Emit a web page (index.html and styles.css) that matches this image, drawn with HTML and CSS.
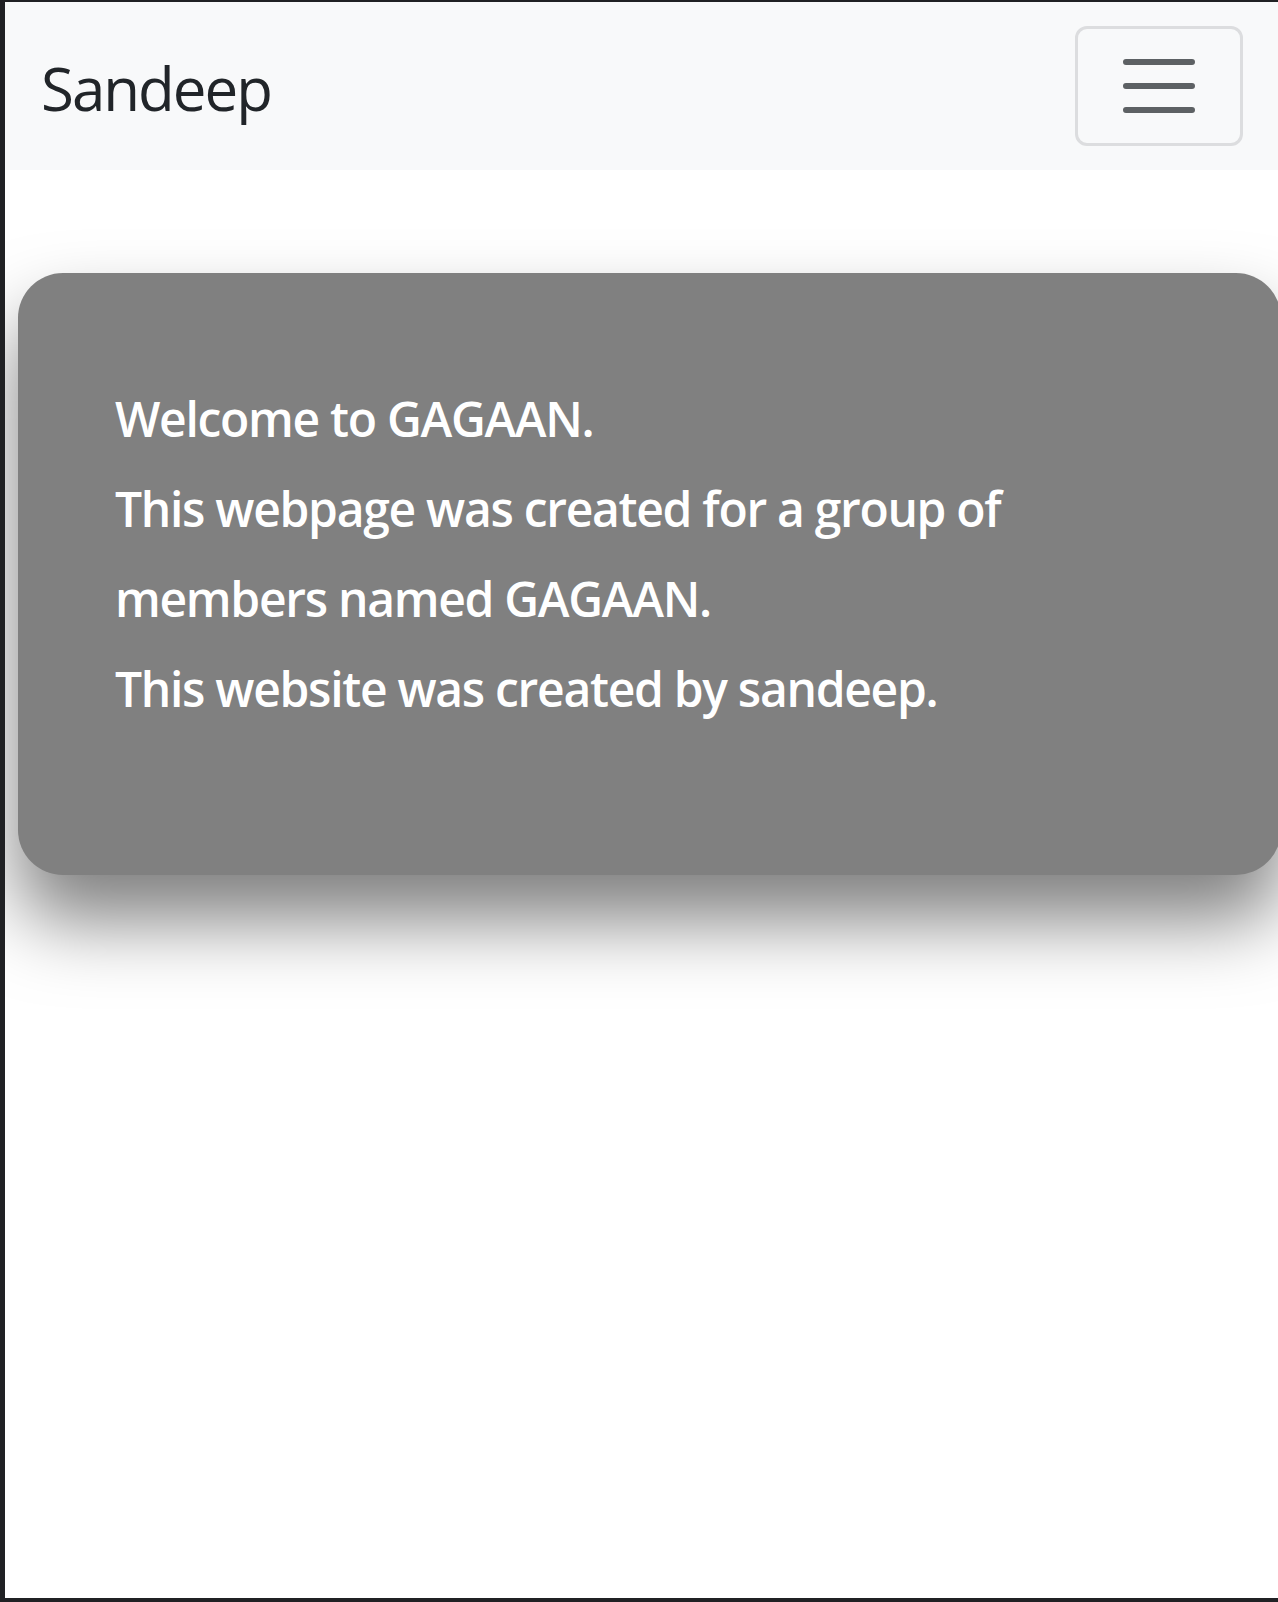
FILE: index.html
```html
<!DOCTYPE html>
<html lang="en">
<head>
<meta charset="utf-8">
<title>Sandeep</title>
<link rel="stylesheet" href="styles.css">
</head>
<body>
<div class="page">
  <nav class="navbar">
    <a class="brand" href="#">Sandeep</a>
    <button class="toggler" type="button" aria-label="Toggle navigation">
      <svg class="toggler-icon" viewBox="0 0 30 30" width="90" height="90" aria-hidden="true">
        <path d="M4 7h22M4 15h22M4 23h22" fill="none" stroke="rgba(33,37,41,0.72)" stroke-width="2" stroke-linecap="round"/>
      </svg>
    </button>
  </nav>
  <main class="main">
    <section class="card">
      <p class="line">Welcome to GAGAAN.</p>
      <p class="line">This webpage was created for a group of<br>members named GAGAAN.</p>
      <p class="line">This website was created by sandeep.</p>
    </section>
  </main>
</div>
</body>
</html>
```

FILE: styles.css
```css
html, body {
  margin: 0;
  padding: 0;
}

body {
  background: #202124;
  font-family: "Open Sans", "Noto Sans", sans-serif;
  overflow: hidden;
}

.page {
  margin: 2px 0 0 5px;
  width: 1273px;
  height: 1596px;
  background: #ffffff;
  overflow: hidden;
}

.navbar {
  box-sizing: border-box;
  height: 168px;
  padding: 24px 35px 24px 36px;
  background: #f8f9fa;
  display: flex;
  align-items: center;
  justify-content: space-between;
}

.brand {
  font-size: 60px;
  line-height: 90px;
  color: #212529;
  text-decoration: none;
  letter-spacing: -2px;
  margin-top: 4px;
}

.toggler {
  box-sizing: border-box;
  width: 168px;
  height: 120px;
  padding: 12px 36px;
  border: 3px solid #dcdddf;
  border-radius: 12px;
  background: transparent;
  display: flex;
  align-items: center;
  justify-content: center;
}

.toggler-icon {
  display: block;
  width: 90px;
  height: 90px;
}

.main {
  padding: 103px 0 0 13px;
}

.card {
  box-sizing: border-box;
  height: 602px;
  margin-right: -3px;
  padding: 101px 40px 0 97px;
  background: #808080;
  border-radius: 45px;
  box-shadow: 0 45px 75px rgba(0, 0, 0, 0.5);
}

.line {
  margin: 0;
  font-size: 48px;
  line-height: 90px;
  font-weight: 600;
  color: #ffffff;
  letter-spacing: -1.3px;
}
```
